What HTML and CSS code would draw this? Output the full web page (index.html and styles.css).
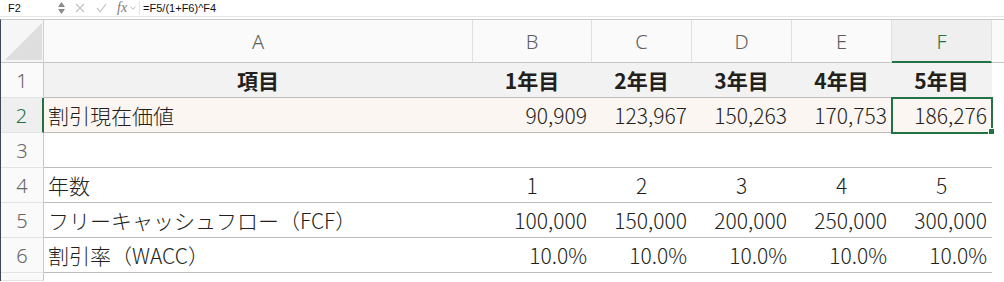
FILE: index.html
```html
<!DOCTYPE html>
<html lang="ja">
<head>
    <title>DCF</title>
    <link rel="stylesheet" href="styles.css">
</head>
<body>
    <div class="formula-bar">
        <div class="name-box">F2</div>
        <div class="stepper">
            <svg width="7" height="5" viewBox="0 0 7 5"><polygon points="3.5,0 7,5 0,5" fill="#8a8a8a"/></svg>
            <svg width="7" height="5" viewBox="0 0 7 5"><polygon points="0,0 7,0 3.5,5" fill="#8a8a8a"/></svg>
        </div>
        <div class="tools">
            <svg class="ico-x" width="10" height="10" viewBox="0 0 10 10"><path d="M1 1L9 9M9 1L1 9" stroke="#c4c4c4" stroke-width="1.2" fill="none"/></svg>
            <svg class="ico-ok" width="11" height="10" viewBox="0 0 11 10"><path d="M1 5L4.2 8.8L10 1" stroke="#c4c4c4" stroke-width="1.2" fill="none"/></svg>
            <span class="fx">fx</span>
            <svg class="ico-dd" width="6" height="4" viewBox="0 0 6 4"><path d="M0.5 0.5L3 3.3L5.5 0.5" stroke="#bdbdbd" stroke-width="1" fill="none"/></svg>
        </div>
        <div class="formula">=F5/(1+F6)^F4</div>
    </div>

    <div class="sheet">
        <!-- column headers -->
        <div class="corner">
            <svg width="42" height="42" viewBox="0 0 42 42"><polygon points="4,40 41,3 41,40" fill="#dedede"/></svg>
        </div>
        <div class="col-hd">A</div>
        <div class="col-hd">B</div>
        <div class="col-hd">C</div>
        <div class="col-hd">D</div>
        <div class="col-hd">E</div>
        <div class="col-hd active">F</div>
        <div class="col-hd last"></div>

        <!-- row 1 -->
        <div class="row-hd">1</div>
        <div class="cell head center">項目</div>
        <div class="cell head center">1年目</div>
        <div class="cell head center">2年目</div>
        <div class="cell head center">3年目</div>
        <div class="cell head center">4年目</div>
        <div class="cell head center">5年目</div>
        <div class="blank"></div>

        <!-- row 2 -->
        <div class="row-hd active">2</div>
        <div class="cell pv">割引現在価値</div>
        <div class="cell pv num">90,909</div>
        <div class="cell pv num">123,967</div>
        <div class="cell pv num">150,263</div>
        <div class="cell pv num">170,753</div>
        <div class="cell pv num selected">186,276</div>
        <div class="blank"></div>

        <!-- row 3 -->
        <div class="row-hd">3</div>
        <div class="cell"></div>
        <div class="cell"></div>
        <div class="cell"></div>
        <div class="cell"></div>
        <div class="cell"></div>
        <div class="cell"></div>
        <div class="blank"></div>

        <!-- row 4 -->
        <div class="row-hd">4</div>
        <div class="cell">年数</div>
        <div class="cell center">1</div>
        <div class="cell center">2</div>
        <div class="cell center">3</div>
        <div class="cell center">4</div>
        <div class="cell center">5</div>
        <div class="blank"></div>

        <!-- row 5 -->
        <div class="row-hd">5</div>
        <div class="cell">フリーキャッシュフロー（FCF）</div>
        <div class="cell num">100,000</div>
        <div class="cell num">150,000</div>
        <div class="cell num">200,000</div>
        <div class="cell num">250,000</div>
        <div class="cell num">300,000</div>
        <div class="blank"></div>

        <!-- row 6 -->
        <div class="row-hd">6</div>
        <div class="cell">割引率（WACC）</div>
        <div class="cell num">10.0%</div>
        <div class="cell num">10.0%</div>
        <div class="cell num">10.0%</div>
        <div class="cell num">10.0%</div>
        <div class="cell num">10.0%</div>
        <div class="blank"></div>

        <!-- row 7 -->
        <div class="row-hd"></div>
    </div>
</body>
</html>
```

FILE: styles.css
```css
body {
    margin: 0;
    padding: 0;
    background: #fff;
    font-family: "Noto Sans CJK JP", sans-serif;
    overflow: hidden;
}
.formula-bar {
    display: flex;
    align-items: center;
    height: 16px;
    border-bottom: 1px solid #e6e6e6;
    font-family: "Liberation Sans", Arial, sans-serif;
    font-size: 11px;
    color: #111;
}
.name-box {
    width: 50px;
    padding-left: 8px;
}
.stepper {
    display: flex;
    flex-direction: column;
    gap: 2px;
}
.stepper svg {
    display: block;
}
.tools {
    display: flex;
    align-items: center;
    margin-left: 10px;
}
.ico-ok {
    margin-left: 11px;
}
.fx {
    margin-left: 10px;
    font-family: "Liberation Serif", serif;
    font-style: italic;
    font-size: 14px;
    color: #7a7a7a;
    line-height: 1;
}
.ico-dd {
    margin-left: 3px;
}
.formula {
    margin-left: 3px;
    padding-left: 3px;
    border-left: 1px solid #e2e2e2;
    line-height: 14px;
}
.sheet {
    display: grid;
    grid-template-columns: 43px 429px 119px 100px 100px 100px 100px 1fr;
    grid-template-rows: 43px repeat(6, 35px) 1fr;
    height: 262px;
    margin-top: 2px;
    border-top: 1px solid #cbcbcb;
    border-left: 1px solid #3b4756;
    box-sizing: border-box;
}
.sheet > div {
    box-sizing: border-box;
    display: flex;
    align-items: center;
    white-space: nowrap;
}
.corner {
    background: #f6f6f6;
    border-right: 1px solid #d0d0d0;
    border-bottom: 1px solid #c6c6c6;
}
.corner svg {
    display: block;
}
.col-hd {
    justify-content: center;
    background: #fafafa;
    border-right: 1px solid #e0e0e0;
    border-bottom: 1px solid #c6c6c6;
    font-family: "Noto Sans", "Liberation Sans", sans-serif;
    font-weight: 300;
    font-size: 20px;
    color: #5e5e5e;
    padding-top: 1px;
}
.col-hd.active {
    background: #efefef;
    color: #217346;
    border-bottom: 2px solid #217346;
}
.col-hd.last {
    border-right: none;
}
.row-hd {
    justify-content: center;
    background: #fafafa;
    border-right: 1px solid #c9c9c9;
    border-bottom: 1px solid #e3e3e3;
    font-family: "Noto Sans", "Liberation Sans", sans-serif;
    font-weight: 300;
    font-size: 20px;
    color: #666;
}
.row-hd.active {
    background: #efefef;
    color: #217346;
    border-right: 2px solid #217346;
}
.cell {
    padding: 0 5px 0 4px;
    border-bottom: 1px solid #bcbcbc;
    font-size: 21px;
    font-weight: 300;
    color: #231f1c;
}
.cell.head {
    background: #f2f2f2;
    font-weight: 700;
}
.cell.pv {
    background: #fcf6f3;
}
.num {
    justify-content: flex-end;
}
.center {
    justify-content: center;
}
.selected {
    position: relative;
    outline: 2px solid #217346;
    outline-offset: -1px;
}
.selected::after {
    content: "";
    position: absolute;
    right: -3px;
    bottom: -3px;
    width: 5px;
    height: 5px;
    background: #217346;
    border: 1px solid #fff;
}
```
